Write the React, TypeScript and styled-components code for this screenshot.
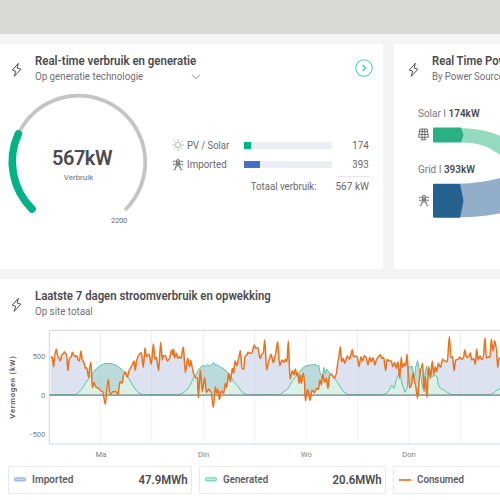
import React from "react";
import styled, { createGlobalStyle } from "styled-components";

const GlobalStyle = createGlobalStyle`
  * { box-sizing: border-box; }
  html, body { margin: 0; height: 100%; overflow: hidden; }
  body { background: #f4f4f4; color: #4b4b4d; font-family: Roboto, "Noto Sans", sans-serif; }
  svg { display: block; flex: none; }
`;

const Page = styled.div`
  width: 500px;
  height: 500px;
  overflow: hidden;
  display: flex;
  flex-direction: column;
`;
const TopBar = styled.div`
  height: 34px;
  flex: none;
  background: #d9d9d7;
`;
const CardRow = styled.div`
  display: grid;
  grid-template-columns: 383px 300px;
  gap: 11px;
  height: 225px;
  flex: none;
  margin-top: 10.3px;
`;
const Card = styled.section<{ $corner?: string }>`
  background: #fff;
  border-radius: ${(p) => p.$corner ?? "2px"};
  overflow: hidden;
`;
const WideCard = styled(Card)`
  margin-top: 10px;
  flex: 1;
`;
const CardHeader = styled.header<{ $inset: number }>`
  height: 46.7px;
  padding: 10.2px 10px 0 ${(p) => p.$inset}px;
  display: flex;
  white-space: nowrap;
`;
const BoltSlot = styled.div`
  width: 24.5px;
  flex: none;
  padding-top: 7.5px;
`;
const Condensed = styled.span<{ $scale?: number; $from?: string }>`
  display: inline-block;
  white-space: nowrap;
  transform: scaleX(${(p) => p.$scale ?? 0.93});
  transform-origin: ${(p) => p.$from ?? "left"} center;
`;
const Title = styled.h2`
  margin: 0;
  font-size: 12px;
  line-height: 15px;
  font-weight: 600;
`;
const Subtitle = styled.div`
  display: flex;
  align-items: center;
  font-size: 10.5px;
  line-height: 15px;
  color: #707072;
`;
const Technology = styled.span`
  width: 155.5px;
`;
const HeaderText = styled.div`
  flex: 1;
`;
const OpenButton = styled.button`
  border: 0;
  padding: 0;
  margin: 4.5px 0 0;
  background: none;
  height: 18px;
`;
const UsageBody = styled.div`
  display: flex;
`;
const Gauge = styled.div`
  width: 172px;
  height: 150px;
  display: grid;
  > * { grid-area: 1 / 1; }
`;
const GaugeText = styled.div`
  width: 158px;
  padding-top: 55.5px;
  text-align: center;
`;
const GaugeValue = styled.div`
  margin-left: 6px;
  font-size: 20px;
  line-height: 24px;
  font-weight: 600;
  letter-spacing: -0.5px;
`;
const GaugeLabel = styled.div`
  margin-top: 1.5px;
  margin-right: 1px;
  font-size: 8px;
  line-height: 11px;
  color: #707072;
`;
const GaugeMax = styled.div`
  align-self: start;
  justify-self: start;
  margin: 125px 0 0 111px;
  font-size: 7.5px;
  line-height: 10px;
  color: #707072;
  letter-spacing: -0.25px;
`;
const Sources = styled.div`
  padding-top: 45px;
  width: 197px;
`;
const SourceRow = styled.div`
  display: grid;
  grid-template-columns: 15px 57px 88px 1fr;
  align-items: center;
  height: 19px;
  font-size: 10.5px;
  color: #68686b;
`;
const Track = styled.div`
  height: 7px;
  margin-top: 0.5px;
  background: #edeef3;
`;
const Fill = styled.div<{ $width: number; $color: string }>`
  width: ${(p) => p.$width}px;
  height: 100%;
  background: ${(p) => p.$color};
`;
const Amount = styled.span`
  text-align: right;
`;
const TotalRow = styled.div`
  display: flex;
  justify-content: flex-end;
  gap: 19px;
  margin-top: 2px;
  font-size: 10.5px;
  line-height: 14px;
  color: #68686b;
`;
const Total = styled.span`
  width: 33px;
  padding-top: 3px;
  border-top: 1px solid #e6e6e8;
  display: flex;
  justify-content: flex-end;
`;
const TotalLabel = styled.span`
  padding-top: 4px;
`;

const FlowBody = styled.div`
  padding-left: 24px;
  padding-top: 15px;
`;
const FlowLabel = styled.div`
  font-size: 10.5px;
  line-height: 15px;
  color: #77777a;
  strong { color: #4b4b4d; font-weight: 600; }
`;
const FlowRow = styled.div<{ $height: number }>`
  display: flex;
  align-items: center;
  height: ${(p) => p.$height}px;
`;
const FlowIcon = styled.div<{ $lift?: number }>`
  width: 14.5px;
  padding-bottom: ${(p) => p.$lift ?? 0}px;
`;

const ChartSlot = styled.div`
  height: 140px;
  margin-top: -1px;
`;
const Legend = styled.div`
  display: grid;
  grid-template-columns: 184px 187px 184px;
  gap: 7px;
  padding-left: 8px;
`;
const LegendItem = styled.div`
  height: 28px;
  margin-top: 1px;
  border: 1px solid #e9e9ea;
  border-radius: 2px;
  padding: 0 3px 0 5px;
  display: flex;
  align-items: center;
  font-size: 10.5px;
  font-weight: 600;
  color: #5e5e61;
`;
const LegendName = styled.span`
  flex: 1;
  padding-left: 5.5px;
`;
const LegendValue = styled.span`
  font-size: 12px;
  color: #4b4b4d;
`;

const Bolt = () => (
  <svg width="12" height="16" viewBox="0 0 12 16" fill="none" stroke="#4e4e50" strokeWidth="1" strokeLinejoin="round">
    <path d="M7.3 1.3 1.3 8.1 4.7 9.2 3.2 14.4 9.9 7.2 6.2 6.1Z" />
  </svg>
);

const Sun = () => (
  <svg width="12" height="12" viewBox="0 0 12 12" fill="none" stroke="#aaaaac" strokeWidth="0.8" strokeLinecap="round">
    <circle cx="6" cy="6" r="2.7" />
    <path d="M6 .5V2M6 10v1.5M.5 6H2M10 6h1.5M2 2l1 1M9 9l1 1M2 10l1-1M9 3l1-1" />
  </svg>
);

const Pylon = () => (
  <svg width="12" height="13" viewBox="0 0 12 13" fill="none" stroke="#58585a" strokeWidth="0.75" strokeLinejoin="round">
    <path d="M4.5 3 5.3 1.2H6.7l.8 1.8M1.6 3.2H10.4M1.6 3v1.3M10.4 3v1.3M1.6 6.2H10.4M1.6 6v1.3M10.4 6v1.3M4.5 3.2l.2 3L2.8 11.6M7.5 3.2l-.2 3L9.2 11.6M4.6 6.3 8.6 10M7.4 6.3 3.4 10M4.6 3.4l2.8 2.8M7.4 3.4l-2.8 2.8M1.6 11.7h2M8.4 11.7h2" />
  </svg>
);

const Panel = () => (
  <svg width="11" height="13" viewBox="0 0 11 13" fill="none" stroke="#58585a" strokeWidth="0.85">
    <path d="M1.8 1H9.2L10.4 9.3H.6ZM1.4 3.6H9.6M1 6.4H10M4.3 1 3.9 9.3M6.7 1l.4 8.3M4.4 9.3v2M6.6 9.3v2M2.5 11.8h6" />
  </svg>
);

type Point = [number, number];

// Each day is traced in thirds of a pixel; the offset moves it to its place on the time axis.
const shift = (dx: number, pts: Point[]): Point[] => pts.map(([x, y]) => [x + dx, y]);

const consumed: Point[] = [
  [152,98],[156,95],[161,125],[164,90],[169,73],[173,92],[181,107],[186,88],[190,86],[193,80],[197,85],[200,90],[204,137],[208,100],[214,95],[217,82],[221,90],[226,95],[231,92],[234,105],[238,108],[243,78],[247,105],[252,112],[256,130],[260,128],[266,157],[270,120],[273,112],[277,188],[282,172],[287,186],[295,190],[303,198],[308,200],[316,238],[322,180],[325,163],[329,205],[333,208],[338,200],[348,200],[354,209],[360,170],[366,175],[371,150],[376,140],[382,157],[388,135],[394,125],[402,108],[406,136],[410,105],[416,90],[424,83],[430,127],[435,68],[439,95],[447,88],
  ...shift(450, [[4,118],[10,57],[15,103],[19,97],[26,137],[32,52],[37,105],[40,92],[46,92],[52,108],[58,102],[62,85],[65,75],[68,90],[71,72],[74,98],[79,84],[83,100],[88,95],[93,100],[100,66],[106,143],[113,100],[119,125],[122,106],[127,128],[132,150],[138,160],[142,158],[145,218],[151,135],[157,200],[164,158],[169,203],[176,193],[183,200],[190,247],[196,185],[200,205],[204,193],[208,224],[214,198],[221,205],[226,175],[230,188],[236,145],[241,170],[247,130],[251,145],[255,108],[261,122],[266,100],[271,77],[276,130],[281,133],[285,93],[290,90],[294,82],[300,85],[305,85],[313,60],[317,70],[324,68]]),
  ...shift(780, [[0,100],[6,87],[10,85],[14,45],[20,135],[27,105],[33,88],[40,113],[46,90],[53,50],[59,122],[66,105],[71,112],[77,103],[81,110],[85,48],[90,162],[97,137],[102,150],[106,132],[110,150],[113,143],[117,175],[120,150],[124,175],[130,145],[133,160],[136,227],[143,193],[150,226],[156,195],[163,203],[170,190],[175,193],[180,165],[184,180],[188,148],[194,172],[199,160],[204,190],[209,150],[214,147],[223,160],[228,150],[235,105],[241,65],[245,110],[250,100],[254,115],[262,93],[269,102],[277,74],[280,95],[287,93],[292,97],[297,125],[303,95],[308,108],[313,92],[318,97],[324,120],[329,97],[334,110],[339,98]]),
  ...shift(1125, [[0,120],[4,105],[10,95],[16,89],[20,100],[26,97],[32,137],[36,103],[42,108],[49,108],[53,125],[59,112],[64,130],[69,110],[74,160],[79,97],[82,127],[88,115],[92,123],[96,87],[101,160],[104,188],[109,182],[114,145],[121,180],[128,220],[134,150],[138,130],[143,115],[147,200],[151,155],[156,217],[161,125],[166,160],[172,108],[176,148],[181,125],[185,140],[190,115],[196,127],[203,103],[208,108],[217,110],[223,35],[228,98],[233,95],[237,137],[242,105],[249,103],[254,97],[261,103],[266,97],[269,75],[275,97],[281,95],[286,83],[290,105],[296,100],[301,118],[305,72],[309,105],[315,92],[320,104],[325,97],[330,38],[334,100],[340,95],[345,97],[349,42],[354,78],[359,47],[364,68],[368,127],[372,100],[380,97]]),
];

const generated: Point[] = [
  [150,209],[225,209],[232,206],[245,193],[258,172],[270,155],[285,135],[300,122],[315,116],[330,115],[345,119],[360,129],[375,143],[385,158],[395,175],[405,192],[415,203],[427,209],
  ...shift(450, [[85,209],[98,205],[110,195],[118,185],[125,170],[132,155],[140,145],[148,130],[158,122],[167,123],[173,118],[180,124],[190,113],[198,120],[204,120],[212,127],[222,132],[230,140],[238,147],[245,160],[252,172],[262,182],[272,195],[280,205],[292,209]]),
  ...shift(780, [[60,209],[72,200],[85,190],[95,170],[105,158],[118,142],[130,127],[140,122],[155,119],[168,119],[172,124],[176,120],[180,142],[184,152],[188,160],[191,127],[196,145],[200,132],[206,140],[213,148],[225,162],[232,172],[240,185],[250,200],[265,209]]),
  ...shift(1125, [[22,209],[35,205],[43,195],[50,180],[57,190],[65,160],[72,145],[77,155],[82,180],[90,202],[97,188],[100,125],[112,125],[118,160],[122,125],[128,107],[133,135],[139,163],[144,190],[150,145],[155,122],[159,150],[163,130],[168,145],[173,155],[179,150],[186,155],[190,180],[196,190],[207,195],[217,203],[230,209],[345,209],[358,203],[366,195],[380,188]]),
];

// Monotone-style smoothing: horizontal handles keep peaks from overshooting.
const smooth = (pts: Point[]) =>
  pts.reduce((d, [x, y], i) => {
    if (i === 0) return `M${x} ${y}`;
    const [px, py] = pts[i - 1];
    const h = (x - px) * 0.3;
    return `${d}C${px + h} ${py} ${x - h} ${y} ${x} ${y}`;
  }, "");
const straight = (pts: Point[]) => "M" + pts.map((p) => p.join(" ")).join("L");

const BASE = 209;
const consumedLine = smooth(consumed);
const generatedLine = straight(generated);
const consumedArea = `${consumedLine}V${BASE}H152Z`;
const generatedArea = `${generatedLine}V${BASE}H150Z`;

const gridLines = [301, 455, 610, 764, 918, 1072, 1227, 1381];
const days: [string, number][] = [["Ma", 303], ["Din", 611], ["Wo", 919], ["Don", 1227]];
const ticks: [string, number][] = [["500", 94], ["0", 210], ["-500", 328]];

const WeekChart = () => (
  <svg width="500" height="140" viewBox="0 0 1500 420" fontFamily="Roboto, sans-serif">
    <defs>
      <clipPath id="under-generated"><path d={generatedArea} /></clipPath>
      <clipPath id="above-base"><rect x="150" y="0" width="1350" height={BASE} /></clipPath>
    </defs>
    {gridLines.map((x) => (
      <path key={x} d={`M${x} 16V356`} stroke="#f1f1f3" strokeWidth="3" />
    ))}
    <g clipPath="url(#above-base)">
      <path d={consumedArea} fill="#dde2f1" />
      <path d={generatedArea} fill="#bcdadb" />
      <path d={consumedArea} fill="#dbf1e8" clipPath="url(#under-generated)" />
      {gridLines.map((x) => (
        <path key={x} d={`M${x} 16V209`} stroke="#8f98b8" strokeOpacity="0.07" strokeWidth="3" />
      ))}
    </g>
    <path d="M148 357V16H1500" fill="none" stroke="#d3d4d8" strokeWidth="3" />
    <path d="M147 357H1500" stroke="#cdd5e4" strokeWidth="3" />
    <path d={generatedLine} fill="none" stroke="#5fc3a0" strokeWidth="3" strokeLinejoin="round" />
    <path d="M148 210.5H1500" stroke="#6f8580" strokeWidth="3.6" />
    <path d={consumedLine} fill="none" stroke="#e9731c" strokeWidth="4.6" strokeLinejoin="round" />
    {ticks.map(([label, y]) => (
      <text key={label} x="136" y={y + 8} fontSize="23" fill="#808083" textAnchor="end">{label}</text>
    ))}
    {days.map(([label, x]) => (
      <text key={label} x={x} y="397" fontSize="23" fill="#808083" textAnchor="middle">{label}</text>
    ))}
    <text transform="translate(46 187) rotate(-90)" fontSize="23" fontWeight="600" fill="#565659" textAnchor="middle" textLength="188">
      Vermogen (kW)
    </text>
  </svg>
);

const GaugeRing = () => (
  <svg width="160" height="130" viewBox="0 91 160 130" fill="none" strokeLinecap="round">
    <path d="M18.3 134A66.6 66.6 0 1 1 126 209" stroke="#c4c4c5" strokeWidth="3.8" />
    <path d="M32 209A66.6 66.6 0 0 1 18.3 134" stroke="#00b386" strokeWidth="7.6" />
  </svg>
);

const swatch = (fill: string, stroke: string) => (
  <svg width="12" height="5" viewBox="0 0 12 5">
    <rect x="0.6" y="0.9" width="10.8" height="3" rx="1" fill={fill} stroke={stroke} />
  </svg>
);

export default function App() {
  return (
    <>
      <GlobalStyle />
      <Page>
        <TopBar />
        <CardRow>
          <Card $corner="0 2px 2px 0">
            <CardHeader $inset={10.5}>
              <BoltSlot><Bolt /></BoltSlot>
              <HeaderText>
                <Title><Condensed $scale={0.955}>Real-time verbruik en generatie</Condensed></Title>
                <Subtitle>
                  <Technology><Condensed>Op generatie technologie</Condensed></Technology>
                  <svg width="10" height="6" viewBox="0 0 10 6" fill="none" stroke="#b9b9bb" strokeWidth="1.2">
                    <path d="M1 1l4 3.6L9 1" />
                  </svg>
                </Subtitle>
              </HeaderText>
              <OpenButton aria-label="Open">
                <svg width="18" height="18" viewBox="0 0 18 18" fill="none" stroke="#48d3ac">
                  <circle cx="9" cy="9" r="8.2" strokeWidth="1.1" />
                  <path d="M7.6 6.1 10.6 9l-3 2.9" strokeWidth="1.5" />
                </svg>
              </OpenButton>
            </CardHeader>
            <UsageBody>
              <Gauge>
                <GaugeRing />
                <GaugeText>
                  <GaugeValue>567kW</GaugeValue>
                  <GaugeLabel>Verbruik</GaugeLabel>
                </GaugeText>
                <GaugeMax>2200</GaugeMax>
              </Gauge>
              <Sources>
                <SourceRow>
                  <Sun />
                  <Condensed $scale={0.9}>PV / Solar</Condensed>
                  <Track><Fill $width={7} $color="#00b386" /></Track>
                  <Amount><Condensed $from="right">174</Condensed></Amount>
                </SourceRow>
                <SourceRow>
                  <Pylon />
                  <Condensed>Imported</Condensed>
                  <Track><Fill $width={16} $color="#4b70bd" /></Track>
                  <Amount><Condensed $from="right">393</Condensed></Amount>
                </SourceRow>
                <TotalRow>
                  <TotalLabel><Condensed $scale={0.92} $from="right">Totaal verbruik:</Condensed></TotalLabel>
                  <Total><Condensed $scale={0.96} $from="right">567 kW</Condensed></Total>
                </TotalRow>
              </Sources>
            </UsageBody>
          </Card>
          <Card>
            <CardHeader $inset={13.5}>
              <BoltSlot><Bolt /></BoltSlot>
              <HeaderText>
                <Title><Condensed $scale={0.935}>Real Time Power Flow</Condensed></Title>
                <Subtitle><Condensed $scale={0.91}>By Power Source</Condensed></Subtitle>
              </HeaderText>
            </CardHeader>
            <FlowBody>
              <FlowLabel><Condensed $scale={0.95}>Solar I <strong>174kW</strong></Condensed></FlowLabel>
              <FlowRow $height={41}>
                <FlowIcon $lift={13}><Panel /></FlowIcon>
                <svg width="70" height="41" viewBox="432.5 120.5 70 41">
                  <path d="M460 127.7C475 127.7 489 130 503 137V157C490 147 480 142 460 142Z" fill="#94dac1" />
                  <path d="M433.7 127H460.5L463 134.5 460.5 142H433.7Q432.5 142 432.5 140.8V128.2Q432.5 127 433.7 127Z" fill="#29b184" />
                </svg>
              </FlowRow>
              <FlowLabel><Condensed $scale={0.95}>Grid I <strong>393kW</strong></Condensed></FlowLabel>
              <FlowRow $height={47}>
                <FlowIcon><Pylon /></FlowIcon>
                <svg width="70" height="47" viewBox="432.5 176.5 70 47">
                  <path d="M459 183.3C475 182.5 488 180.5 503 176.5V212C488 215 475 216.8 459 216.8Z" fill="#93aec9" />
                  <path d="M433.7 183.3H459.5L463 200.5 459.5 217.3H433.7Q432.5 217.3 432.5 216V184.5Q432.5 183.3 433.7 183.3Z" fill="#24618f" />
                </svg>
              </FlowRow>
            </FlowBody>
          </Card>
        </CardRow>
        <WideCard $corner="0">
          <CardHeader $inset={10.5}>
            <BoltSlot><Bolt /></BoltSlot>
            <HeaderText>
              <Title><Condensed $scale={0.948}>Laatste 7 dagen stroomverbruik en opwekking</Condensed></Title>
              <Subtitle><Condensed>Op site totaal</Condensed></Subtitle>
            </HeaderText>
          </CardHeader>
          <ChartSlot><WeekChart /></ChartSlot>
          <Legend>
            <LegendItem>
              {swatch("#c9d6f2", "#86a1df")}
              <LegendName><Condensed $scale={0.96}>Imported</Condensed></LegendName>
              <LegendValue><Condensed $scale={0.95} $from="right">47.9MWh</Condensed></LegendValue>
            </LegendItem>
            <LegendItem>
              {swatch("#c4f1e2", "#52cda6")}
              <LegendName><Condensed>Generated</Condensed></LegendName>
              <LegendValue><Condensed $scale={0.95} $from="right">20.6MWh</Condensed></LegendValue>
            </LegendItem>
            <LegendItem>
              <svg width="12" height="2" viewBox="0 0 12 2"><rect width="12" height="2" fill="#ee8a42" /></svg>
              <LegendName><Condensed>Consumed</Condensed></LegendName>
            </LegendItem>
          </Legend>
        </WideCard>
      </Page>
    </>
  );
}
